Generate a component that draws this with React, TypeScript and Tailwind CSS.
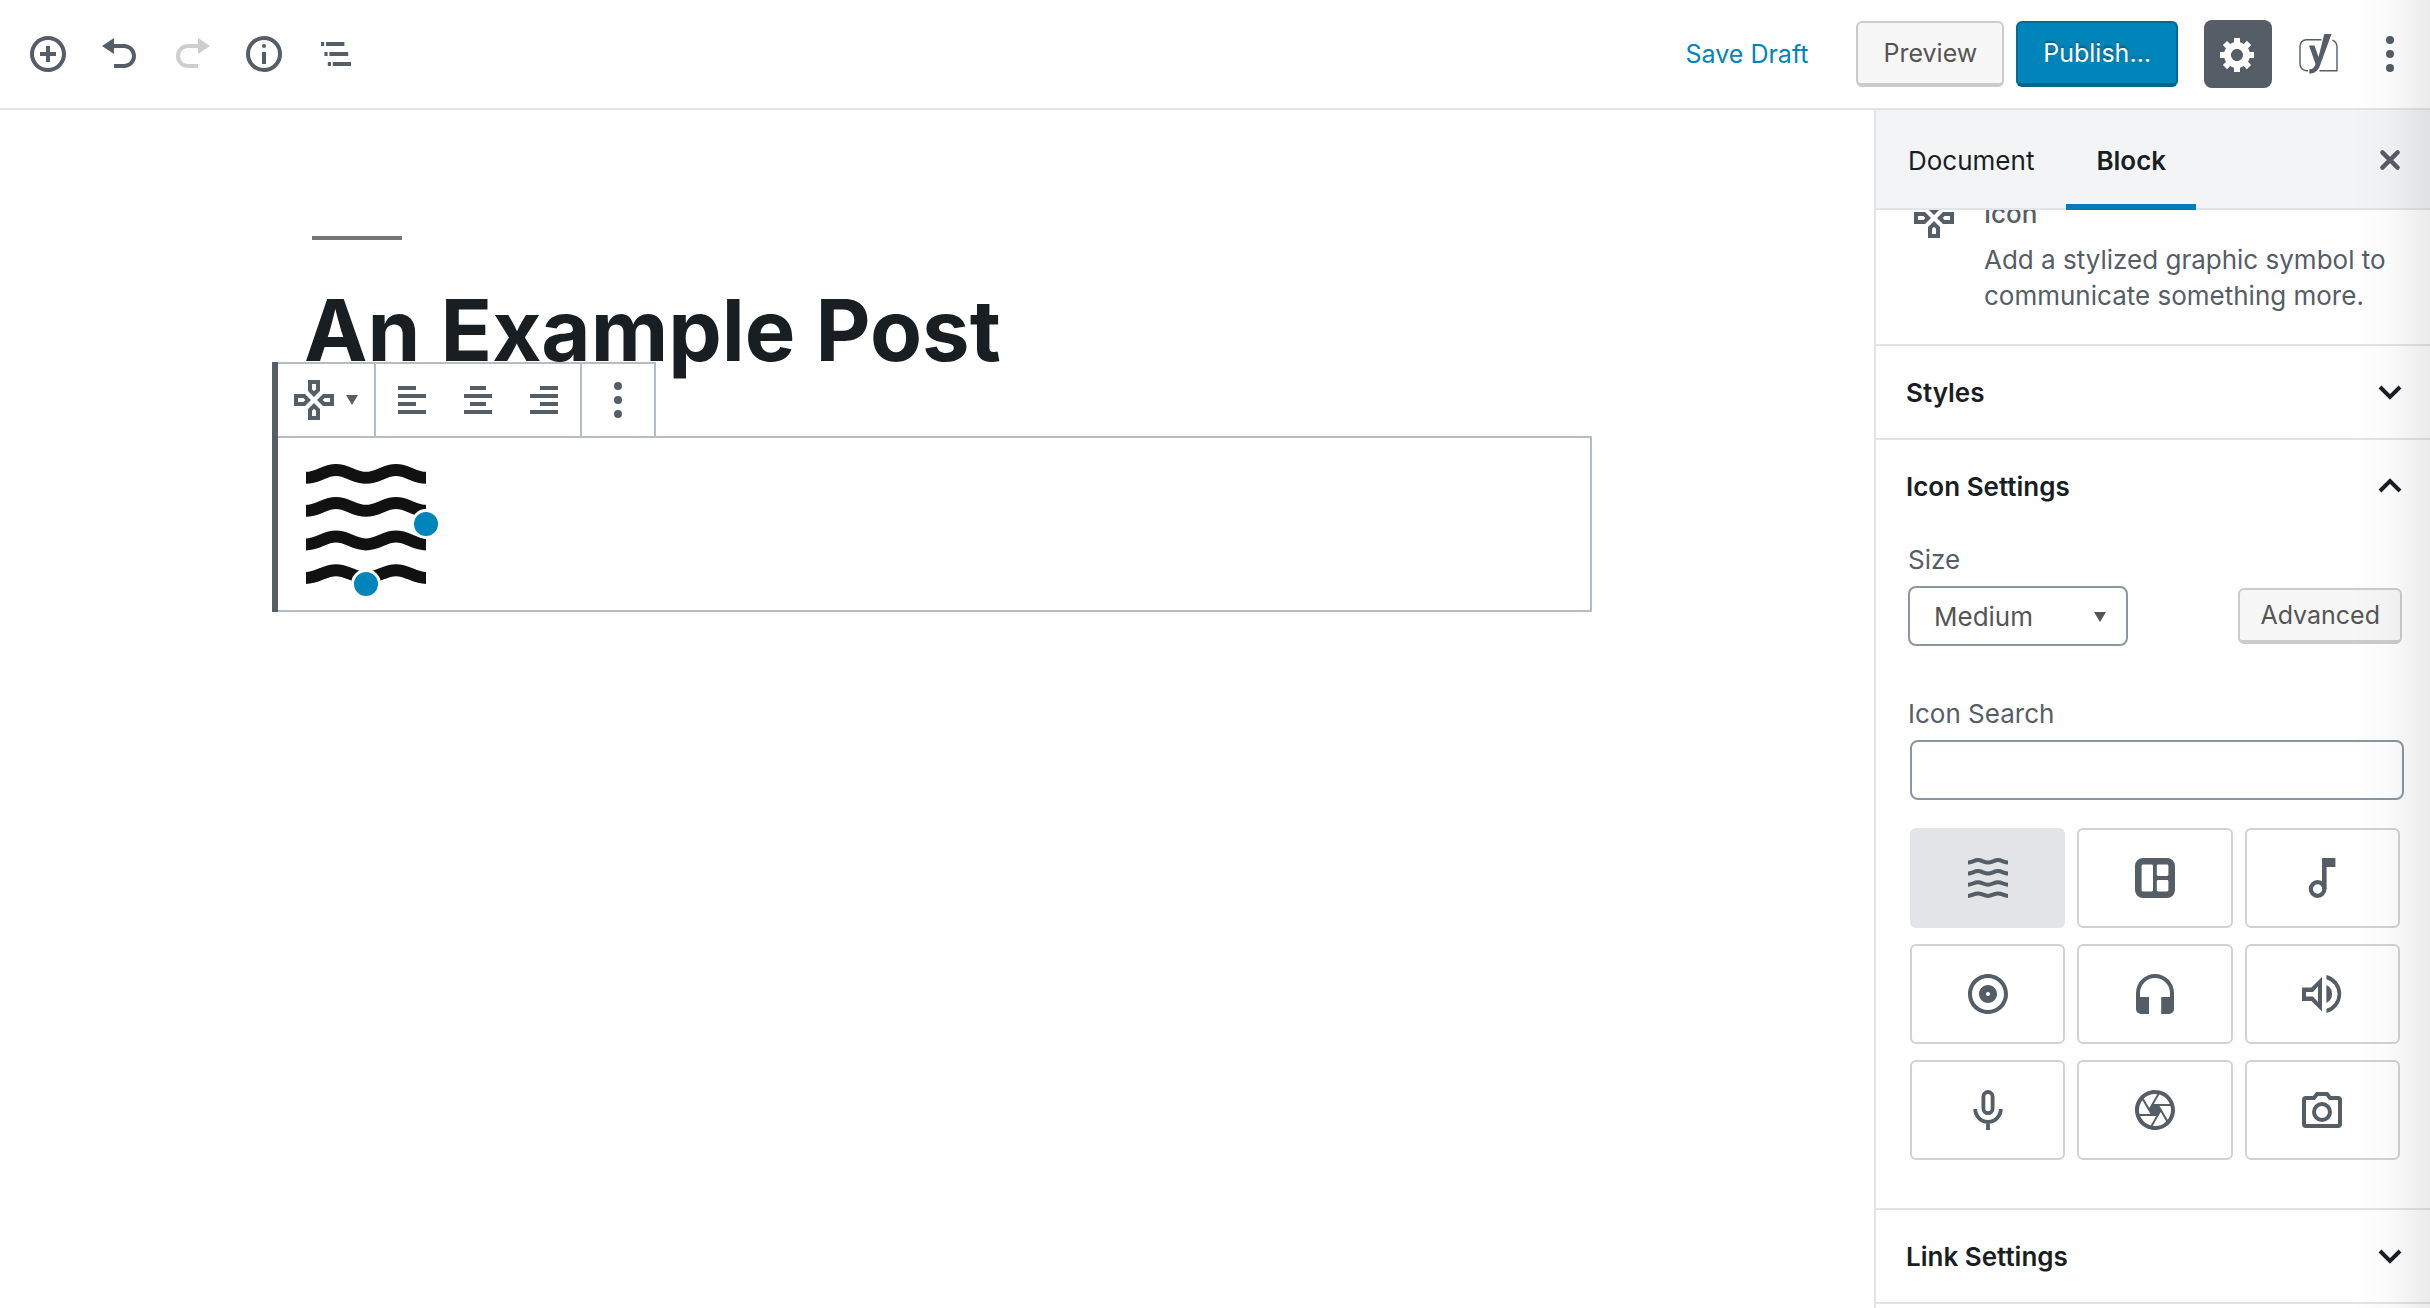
import { useState } from "react";
import type { ReactNode } from "react";
import { MdOutlineCamera, MdOutlineAlbum } from "react-icons/md";

const WavesIcon = ({ className }: { className: string }) => (
  <svg viewBox="0 0 24 24" className={className} aria-hidden="true">
    <g fill="none" stroke="currentColor" strokeWidth="2">
      <path d="M2 4.300c2 0 3-1.300 5-1.300s3 1.300 5 1.300 3-1.300 5-1.300 3 1.300 5 1.300" />
      <path d="M2 9.800c2 0 3-1.300 5-1.300s3 1.300 5 1.300 3-1.300 5-1.300 3 1.300 5 1.300" />
      <path d="M2 15.400c2 0 3-1.300 5-1.300s3 1.300 5 1.300 3-1.300 5-1.300 3 1.300 5 1.300" />
      <path d="M2 21c2 0 3-1.300 5-1.300s3 1.300 5 1.300 3-1.300 5-1.300 3 1.300 5 1.300" />
    </g>
  </svg>
);

const InserterIcon = () => (
  <svg viewBox="0 0 20 20" className="size-10 fill-current" aria-hidden="true">
    <path d="M10 1c-5 0-9 4-9 9s4 9 9 9 9-4 9-9-4-9-9-9zm0 16c-3.900 0-7-3.100-7-7s3.100-7 7-7 7 3.100 7 7-3.100 7-7 7zm1-11H9v3H6v2h3v3h2v-3h3V9h-3V6z" />
  </svg>
);

const UndoIcon = () => (
  <svg viewBox="0 0 20 20" className="size-10 fill-current" aria-hidden="true">
    <path d="M12 5H7V2L1 6l6 4V7h5c2.200 0 4 1.800 4 4s-1.800 4-4 4H7v2h5c3.300 0 6-2.700 6-6s-2.700-6-6-6z" />
  </svg>
);

const RedoIcon = () => (
  <svg viewBox="0 0 20 20" className="size-10 fill-current" aria-hidden="true">
    <path d="M8 5h5V2l6 4-6 4V7H8c-2.200 0-4 1.800-4 4s1.800 4 4 4h5v2H8c-3.300 0-6-2.700-6-6s2.700-6 6-6z" />
  </svg>
);

const InfoIcon = () => (
  <svg viewBox="0 0 20 20" className="size-10" aria-hidden="true">
    <circle cx="10" cy="10" r="8" fill="none" stroke="currentColor" strokeWidth="2" />
    <circle cx="10" cy="6" r="1" fill="currentColor" />
    <path d="M9 9h2v6H9z" fill="currentColor" />
  </svg>
);

const NavigatorIcon = () => (
  <svg viewBox="0 0 20 20" className="size-10 fill-current" aria-hidden="true">
    <path d="M2.500 4h1.600v2H2.500zM5 4h9.200v2H5zM4.200 9h1.600v2H4.200zM6.700 9h9.400v2H6.700zM5.900 14h1.600v2H5.900zM8.400 14h9.100v2H8.400z" />
  </svg>
);

const GearIcon = () => (
  <svg viewBox="0 0 20 20" className="size-10 fill-current" aria-hidden="true">
    <path d="M18 12h-2.180c-.17.7-.44 1.350-.81 1.930l1.540 1.540-2.100 2.100-1.540-1.540c-.58.36-1.230.63-1.910.79V19H8v-2.180c-.68-.16-1.330-.43-1.910-.79l-1.540 1.540-2.120-2.120 1.540-1.540c-.36-.58-.63-1.230-.79-1.910H1V9.030h2.170c.16-.7.44-1.350.8-1.940L2.430 5.550l2.100-2.100 1.540 1.540c.58-.37 1.240-.64 1.930-.81V2h3v2.180c.68.16 1.330.43 1.910.79l1.540-1.540 2.120 2.120-1.540 1.540c.36.59.64 1.240.8 1.940H18V12zm-8.500 1.500c1.660 0 3-1.340 3-3s-1.340-3-3-3-3 1.340-3 3 1.340 3 3 3z" />
  </svg>
);

const YoastIcon = () => (
  <svg viewBox="0 0 48 40" className="h-10 w-12" aria-hidden="true">
    <path
      d="M29.500 5.700H14.500A6.500 6.500 0 0 0 8 12.200v18A6.500 6.500 0 0 0 14.500 36.700H16M27.500 36.700H45V13c0-3-1.500-5.500-4.500-6.800"
      fill="none"
      stroke="currentColor"
      strokeWidth="1.400"
    />
    <path
      d="M32.300 0h7.200L28 31.500c-2.200 5.500-5 8-10.700 8v-4.300c3.500 0 5.200-1.700 6.200-5.200L17 11.500h5.500l4 11.500z"
      fill="currentColor"
    />
  </svg>
);

const MoreIcon = () => (
  <svg viewBox="0 0 20 20" className="size-10 fill-current" aria-hidden="true">
    <circle cx="10" cy="3" r="2" />
    <circle cx="10" cy="10" r="2" />
    <circle cx="10" cy="17" r="2" />
  </svg>
);

const CloseIcon = () => (
  <svg viewBox="0 0 20 20" className="size-10" aria-hidden="true">
    <path
      d="M6.200 6.200l7.600 7.600M13.800 6.200l-7.600 7.600"
      fill="none"
      stroke="currentColor"
      strokeWidth="2.200"
      strokeLinecap="round"
    />
  </svg>
);

const GamepadIcon = () => (
  <svg viewBox="0 0 24 24" className="size-12 fill-current" aria-hidden="true">
    <path d="M13 4v2.670l-1 1-1-1V4h2m7 7v2h-2.670l-1-1 1-1H20M6.670 11l1 1-1 1H4v-2h2.670M12 16.330l1 1V20h-2v-2.670l1-1M15 2H9v5.500l3 3 3-3V2zm7 7h-5.500l-3 3 3 3H22V9zM7.500 9H2v6h5.500l3-3-3-3zm4.500 4.500l-3 3V22h6v-5.500l-3-3z" />
  </svg>
);

const AlignIcon = ({ d }: { d: string }) => (
  <svg viewBox="0 0 20 20" className="size-10 fill-current" aria-hidden="true">
    <path d={d} />
  </svg>
);

const DownTriangle = ({ className }: { className: string }) => (
  <svg viewBox="0 0 12 10" className={className} aria-hidden="true">
    <path d="M0 0h12L6 10z" fill="currentColor" />
  </svg>
);

const Chevron = ({ open = false }: { open?: boolean }) => (
  <svg viewBox="0 0 24 16" className="h-4 w-6" aria-hidden="true">
    <path d={open ? "M2 13L12 3l10 10" : "M2 3l10 10L22 3"} fill="none" stroke="currentColor" strokeWidth="4" />
  </svg>
);

const LayoutIcon = () => (
  <svg viewBox="0 0 24 24" className="size-12 fill-current" aria-hidden="true">
    <path
      fillRule="evenodd"
      d="M6 2h12a4 4 0 0 1 4 4v12a4 4 0 0 1-4 4H6a4 4 0 0 1-4-4V6a4 4 0 0 1 4-4zm0 3.300a.7.7 0 0 0-.7.7v12a.7.7 0 0 0 .7.7h4.300a.7.7 0 0 0 .7-.7V6a.7.7 0 0 0-.7-.7zm7.600 0a.7.7 0 0 0-.7.7v4.300a.7.7 0 0 0 .7.700H18a.7.7 0 0 0 .7-.7V6a.7.7 0 0 0-.7-.7zm0 7.700a.7.7 0 0 0-.7.7V18a.7.7 0 0 0 .7.7H18a.7.7 0 0 0 .7-.7v-4.300a.7.7 0 0 0-.7-.7z"
    />
  </svg>
);

const NoteIcon = () => (
  <svg viewBox="0 0 24 24" className="size-12" aria-hidden="true">
    <circle cx="9.800" cy="17.500" r="3.400" fill="none" stroke="currentColor" strokeWidth="2.100" />
    <path d="M12 2h6.700v4.500h-4.400v11H12z" fill="currentColor" />
  </svg>
);

const HeadphonesIcon = () => (
  <svg viewBox="0 0 24 24" className="size-12 fill-current" aria-hidden="true">
    <path d="M12 2a9.500 9.500 0 0 0-9.500 9.500v8A2.500 2.500 0 0 0 5 22h4v-8.500H4.500v-2a7.500 7.500 0 0 1 15 0v2H15.100V22H19a2.500 2.500 0 0 0 2.500-2.500v-8A9.500 9.500 0 0 0 12 2z" />
  </svg>
);

const VolumeIcon = () => (
  <svg viewBox="0 0 24 24" className="size-12 fill-current" aria-hidden="true">
    <path fillRule="evenodd" d="M12 3.500L6.700 8.800H2v6.700h4.700l5.300 5.300zM10 8.300v7.700l-2.500-2.700H4V11h3.500z" />
    <path d="M14.200 7.500a5 5 0 0 1 0 9zM14.200 2.500a9.800 9.800 0 0 1 0 19v-2.100a7.700 7.700 0 0 0 0-14.800z" />
  </svg>
);

const MicIcon = () => (
  <svg viewBox="0 0 24 24" className="size-12" aria-hidden="true">
    <g fill="none" stroke="currentColor" strokeWidth="1.900">
      <rect x="9.700" y="3" width="4.600" height="10.600" rx="2.300" />
      <path d="M5.600 11.500a6.400 6.400 0 0 0 12.800 0M12 17.800V22" />
    </g>
  </svg>
);

const CameraIcon = () => (
  <svg viewBox="0 0 24 24" className="size-12" aria-hidden="true">
    <g fill="none" stroke="currentColor" strokeWidth="2">
      <path d="M4 6h4l1.500-2h5L16 6h4a1 1 0 0 1 1 1v12a1 1 0 0 1-1 1H4a1 1 0 0 1-1-1V7a1 1 0 0 1 1-1z" />
      <circle cx="12" cy="13" r="4" />
    </g>
  </svg>
);

const alignments = [
  { label: "Align left", d: "M12 5V3H3v2h9zm5 4V7H3v2h14zm-5 4v-2H3v2h9zm5 4v-2H3v2h14z" },
  { label: "Align center", d: "M14 5V3H6v2h8zm3 4V7H3v2h14zm-3 4v-2H6v2h8zm3 4v-2H3v2h14z" },
  { label: "Align right", d: "M17 5V3H8v2h9zm0 4V7H3v2h14zm0 4v-2H8v2h9zm0 4v-2H3v2h14z" },
];

const icons: { name: string; icon: ReactNode }[] = [
  { name: "Waves", icon: <WavesIcon className="size-12" /> },
  { name: "Layout", icon: <LayoutIcon /> },
  { name: "Note", icon: <NoteIcon /> },
  { name: "Album", icon: <MdOutlineAlbum className="size-12" /> },
  { name: "Headphones", icon: <HeadphonesIcon /> },
  { name: "Volume", icon: <VolumeIcon /> },
  { name: "Microphone", icon: <MicIcon /> },
  { name: "Aperture", icon: <MdOutlineCamera className="size-12" /> },
  { name: "Camera", icon: <CameraIcon /> },
];

const ToolButton = ({ label, disabled, children }: { label: string; disabled?: boolean; children: ReactNode }) => (
  <button
    type="button"
    aria-label={label}
    disabled={disabled}
    className="flex size-[72px] items-center justify-center disabled:text-[#ccced0]"
  >
    {children}
  </button>
);

const PanelToggle = ({ title, open = false }: { title: string; open?: boolean }) => (
  <h2>
    <button
      type="button"
      aria-expanded={open}
      className="flex h-[92px] w-full items-center justify-between pr-7 pl-[30px] text-[26px] font-semibold text-[#191e23]"
    >
      {title}
      <Chevron open={open} />
    </button>
  </h2>
);

const Header = () => (
  <header className="flex h-[110px] shrink-0 items-center justify-between border-b-2 border-[#e2e4e7] pl-3">
    <div className="flex">
      <ToolButton label="Add block"><InserterIcon /></ToolButton>
      <ToolButton label="Undo"><UndoIcon /></ToolButton>
      <ToolButton label="Redo" disabled><RedoIcon /></ToolButton>
      <ToolButton label="Content structure"><InfoIcon /></ToolButton>
      <ToolButton label="Block navigation"><NavigatorIcon /></ToolButton>
    </div>
    <div className="flex items-center">
      <button type="button" className="mr-12 pt-[2px] text-[25px] text-[#0085ba]">Save Draft</button>
      <button
        type="button"
        className="mr-3 h-[66px] rounded-md border-2 border-b-4 border-[#ccc] bg-[#f7f7f7] px-[25px] pt-[2px] text-[25px] text-[#555]"
      >
        Preview
      </button>
      <button
        type="button"
        className="mr-[26px] h-[66px] rounded-md border-2 border-b-4 border-[#006a95] border-b-[#00648c] bg-[#0085ba] px-[25px] pt-[2px] text-[25px] text-white text-shadow-[0_-2px_2px_#005d82]"
      >
        Publish…
      </button>
      <button
        type="button"
        aria-label="Settings"
        className="flex size-[68px] items-center justify-center rounded-lg bg-[#555d66] text-white"
      >
        <GearIcon />
      </button>
      <button type="button" aria-label="Yoast SEO" className="ml-[10px] flex size-[68px] items-center justify-center">
        <YoastIcon />
      </button>
      <button type="button" aria-label="More tools" className="flex size-20 items-center justify-center">
        <MoreIcon />
      </button>
    </div>
  </header>
);

const Editor = () => (
  <main className="flex-1 pt-[126px] pr-[282px] pl-[272px]">
    <div className="ml-10 h-1 w-[90px] bg-[#767676]" />
    <h1 className="mt-[38px] ml-8 text-[85px] leading-[106px] font-bold text-[#191e23]">An Example Post</h1>
    <section aria-label="Icon block" className="relative -mt-[22px] border-l-6 border-[#555d66]">
      <div className="flex h-[74px] w-fit border-t-2 border-r-2 border-[#b5bcc2] bg-white">
        <button
          type="button"
          aria-label="Change block type"
          className="flex items-center gap-2 border-r-2 border-[#b5bcc2] pr-4 pl-3"
        >
          <GamepadIcon />
          <DownTriangle className="h-[10px] w-3" />
        </button>
        <div className="flex border-r-2 border-[#b5bcc2] px-[3px]">
          {alignments.map((item) => (
            <button key={item.label} type="button" aria-label={item.label} className="flex w-[66px] items-center justify-center">
              <AlignIcon d={item.d} />
            </button>
          ))}
        </div>
        <ToolButton label="More options"><MoreIcon /></ToolButton>
      </div>
      <div className="border-2 border-l-0 border-[#b5bcc2] px-4 py-[14px]">
        <div className="relative size-36">
          <WavesIcon className="size-36 text-[#111]" />
          <span className="absolute top-1/2 -right-[3px] size-[30px] -translate-y-1/2 rounded-full border-3 border-white bg-[#0085ba]" />
          <span className="absolute -bottom-[3px] left-1/2 size-[30px] -translate-x-1/2 rounded-full border-3 border-white bg-[#0085ba]" />
        </div>
      </div>
    </section>
  </main>
);

const Sidebar = () => {
  const [selected, setSelected] = useState("Waves");

  return (
    <aside className="flex w-[556px] shrink-0 flex-col overflow-hidden border-l-2 border-[#e2e4e7]">
      <div className="relative z-10 flex h-[100px] shrink-0 items-stretch border-b-2 border-[#e2e4e7] bg-[#f3f4f5] text-[26px] text-[#191e23]">
        <button type="button" className="px-8 pt-[2px]">Document</button>
        <button type="button" className="-mb-[2px] border-b-6 border-[#007cba] px-[30px] pt-[6px] font-semibold">
          Block
        </button>
        <button type="button" aria-label="Close settings" className="mr-5 ml-auto pt-[2px] text-[#555d66]">
          <CloseIcon />
        </button>
      </div>

      <div className="-mt-4 flex gap-[26px] border-b-2 border-[#e2e4e7] px-[34px] pb-[30px]">
        <div className="shrink-0">
          <GamepadIcon />
        </div>
        <div className="pt-[2px] text-[26px] leading-9">
          <h2 className="mb-[10px] font-medium">Icon</h2>
          <p>Add a stylized graphic symbol to communicate something more.</p>
        </div>
      </div>

      <section className="border-b-2 border-[#e2e4e7]">
        <PanelToggle title="Styles" />
      </section>

      <section className="border-b-2 border-[#e2e4e7] pb-12">
        <PanelToggle title="Icon Settings" open />
        <div className="pr-7 pl-8 text-[26px]">
          <label htmlFor="icon-size" className="mt-[10px] block leading-9">Size</label>
          <div className="mt-2 flex items-center justify-between">
            <div className="relative">
              <select
                id="icon-size"
                defaultValue="medium"
                className="h-[60px] w-[220px] appearance-none rounded-lg border-2 border-[#8d96a0] bg-white px-6 text-[#555]"
              >
                <option value="small">Small</option>
                <option value="medium">Medium</option>
                <option value="large">Large</option>
              </select>
              <DownTriangle className="pointer-events-none absolute top-[26px] right-[22px] h-[10px] w-3 text-[#555]" />
            </div>
            <button
              type="button"
              className="h-14 rounded-md border-2 border-b-4 border-[#ccc] bg-[#f7f7f7] px-5 pt-[2px] text-[25px] text-[#555]"
            >
              Advanced
            </button>
          </div>
          <label htmlFor="icon-search" className="mt-[50px] block leading-9">Icon Search</label>
          <div className="-mr-[2px] pl-[2px]">
            <input
              id="icon-search"
              type="text"
              className="mt-2 block h-[60px] w-full rounded-lg border-2 border-[#8d96a0] px-4"
            />
          </div>
          <ul className="mt-7 grid grid-cols-3 gap-x-3 gap-y-4 px-[2px]">
            {icons.map((item) => (
              <li key={item.name}>
                <button
                  type="button"
                  aria-label={item.name}
                  aria-pressed={selected === item.name}
                  onClick={() => setSelected(item.name)}
                  className={`flex h-[100px] w-full items-center justify-center rounded-md border-2 ${
                    selected === item.name ? "border-[#e2e4e7] bg-[#e2e4e7]" : "border-[#d2d2d2]"
                  }`}
                >
                  {item.icon}
                </button>
              </li>
            ))}
          </ul>
        </div>
      </section>

      <section className="border-b-2 border-[#e2e4e7]">
        <PanelToggle title="Link Settings" />
      </section>
    </aside>
  );
};

export default function App() {
  return (
    <div className="relative flex h-screen flex-col overflow-hidden bg-white font-[Inter,sans-serif] text-[#555d66]">
      <Header />
      <div className="flex flex-1">
        <Editor />
        <Sidebar />
      </div>
      <div className="pointer-events-none absolute inset-y-0 right-0 z-20 w-20 bg-linear-to-r from-transparent via-black/2 to-black/8" />
    </div>
  );
}
